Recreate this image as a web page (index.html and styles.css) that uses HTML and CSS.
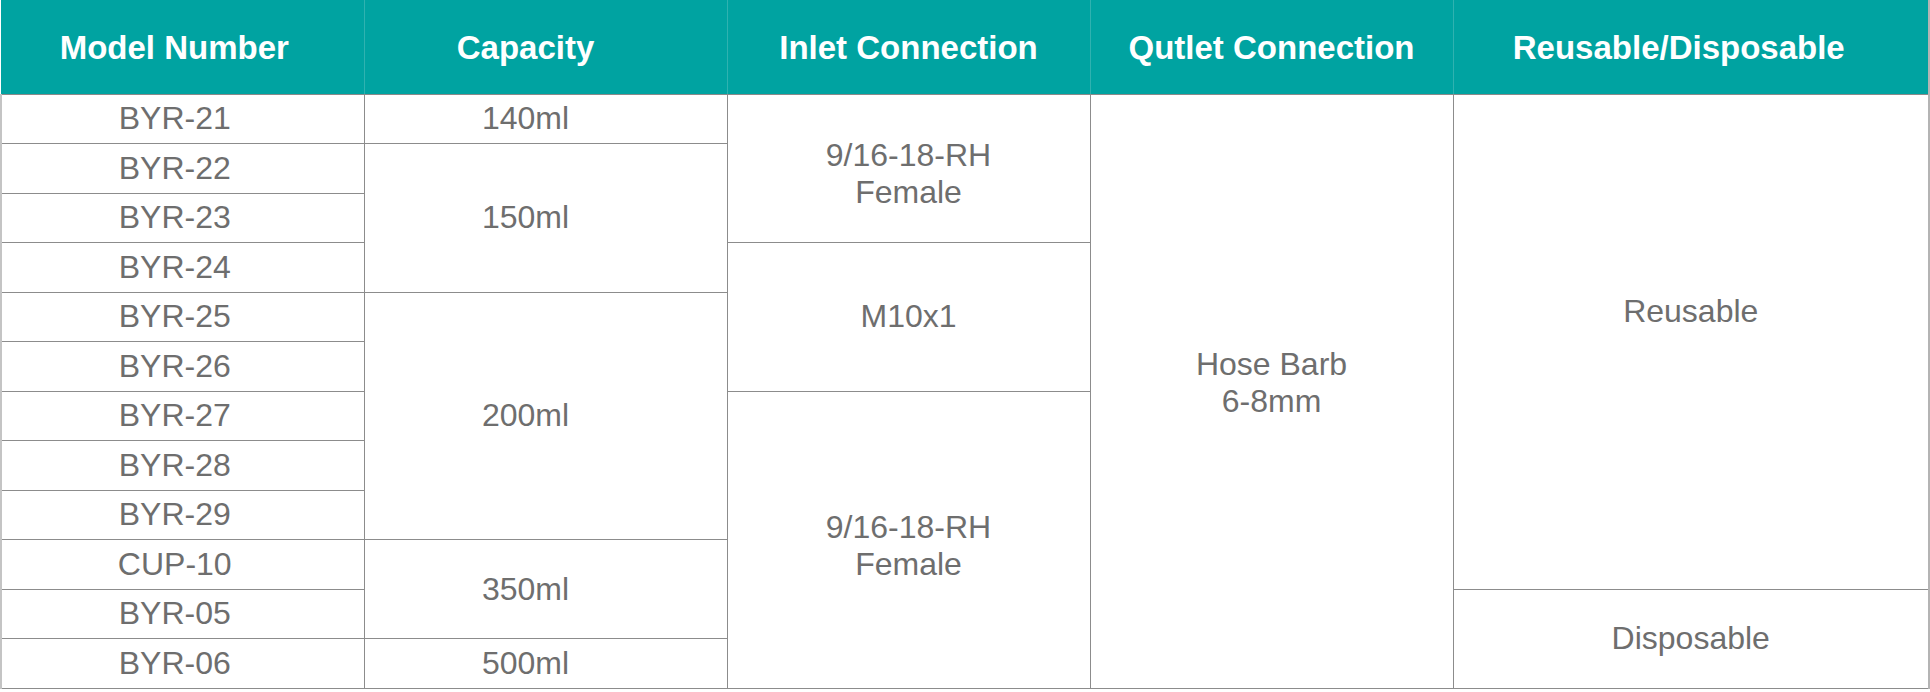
FILE: index.html
```html
<!DOCTYPE html>
<html lang="en">
<head>
<meta charset="utf-8">
<title>Models</title>
<link rel="stylesheet" href="styles.css">
</head>
<body>
<table class="spec">
  <colgroup>
    <col class="c-std"><col class="c-std"><col class="c-std"><col class="c-std"><col class="c-wide">
  </colgroup>
  <thead>
    <tr class="head-row">
      <th class="first">Model Number</th>
      <th class="cap">Capacity</th>
      <th>Inlet Connection</th>
      <th>Qutlet Connection</th>
      <th class="last">Reusable/Disposable</th>
    </tr>
  </thead>
  <tbody>
    <tr>
      <td class="first">BYR-21</td>
      <td class="cap">140ml</td>
      <td rowspan="3" class="shift-down">9/16-18-RH<br>Female</td>
      <td rowspan="12" class="shift-up">Hose Barb<br>6-8mm</td>
      <td rowspan="10" class="last reuse">Reusable</td>
    </tr>
    <tr><td class="first">BYR-22</td><td rowspan="3" class="cap">150ml</td></tr>
    <tr><td class="first">BYR-23</td></tr>
    <tr><td class="first">BYR-24</td><td rowspan="3">M10x1</td></tr>
    <tr><td class="first">BYR-25</td><td rowspan="5" class="cap">200ml</td></tr>
    <tr><td class="first">BYR-26</td></tr>
    <tr><td class="first">BYR-27</td><td rowspan="6" class="shift-down">9/16-18-RH<br>Female</td></tr>
    <tr><td class="first">BYR-28</td></tr>
    <tr><td class="first">BYR-29</td></tr>
    <tr><td class="first">CUP-10</td><td rowspan="2" class="cap">350ml</td></tr>
    <tr><td class="first">BYR-05</td><td rowspan="2" class="last">Disposable</td></tr>
    <tr><td class="first">BYR-06</td><td class="cap">500ml</td></tr>
  </tbody>
</table>
</body>
</html>
```
FILE: styles.css
```css
html, body {
  margin: 0;
  padding: 0;
  background: #ffffff;
}

.spec {
  border-collapse: collapse;
  table-layout: fixed;
  width: 1928px;
  font-family: "Liberation Sans", Arial, sans-serif;
}

.c-std { width: 363px; }
.c-wide { width: 476px; }

.head-row { height: 94px; }

.spec th {
  background: #00a3a1;
  color: #ffffff;
  font-size: 33px;
  font-weight: bold;
  text-align: center;
  vertical-align: middle;
  padding: 3px 0 0 0;
  border-right: 1px solid #2fb2b0;
  border-bottom: 1px solid #8a8a8a;
  line-height: 38px;
}

.spec th.last { border-right: 2px solid #b4b4b4; padding-right: 24px; }

.spec tbody tr { height: 49.5px; }

.spec td {
  font-size: 32px;
  line-height: 37px;
  color: #6e6e6e;
  text-align: center;
  vertical-align: middle;
  padding: 0;
  border: 1px solid #8c8c8c;
}

.spec td.first { border-left: 2px solid #c4c4c4; }
.spec td.last { border-right: 2px solid #b4b4b4; }

.spec th.first, .spec td.first { padding-right: 16px; }
.spec th.cap, .spec td.cap { padding-right: 40px; }

.spec td.shift-down { padding-top: 12px; }
.spec td.shift-up { padding-bottom: 16px; }
.spec td.reuse { padding-bottom: 60px; }
```
